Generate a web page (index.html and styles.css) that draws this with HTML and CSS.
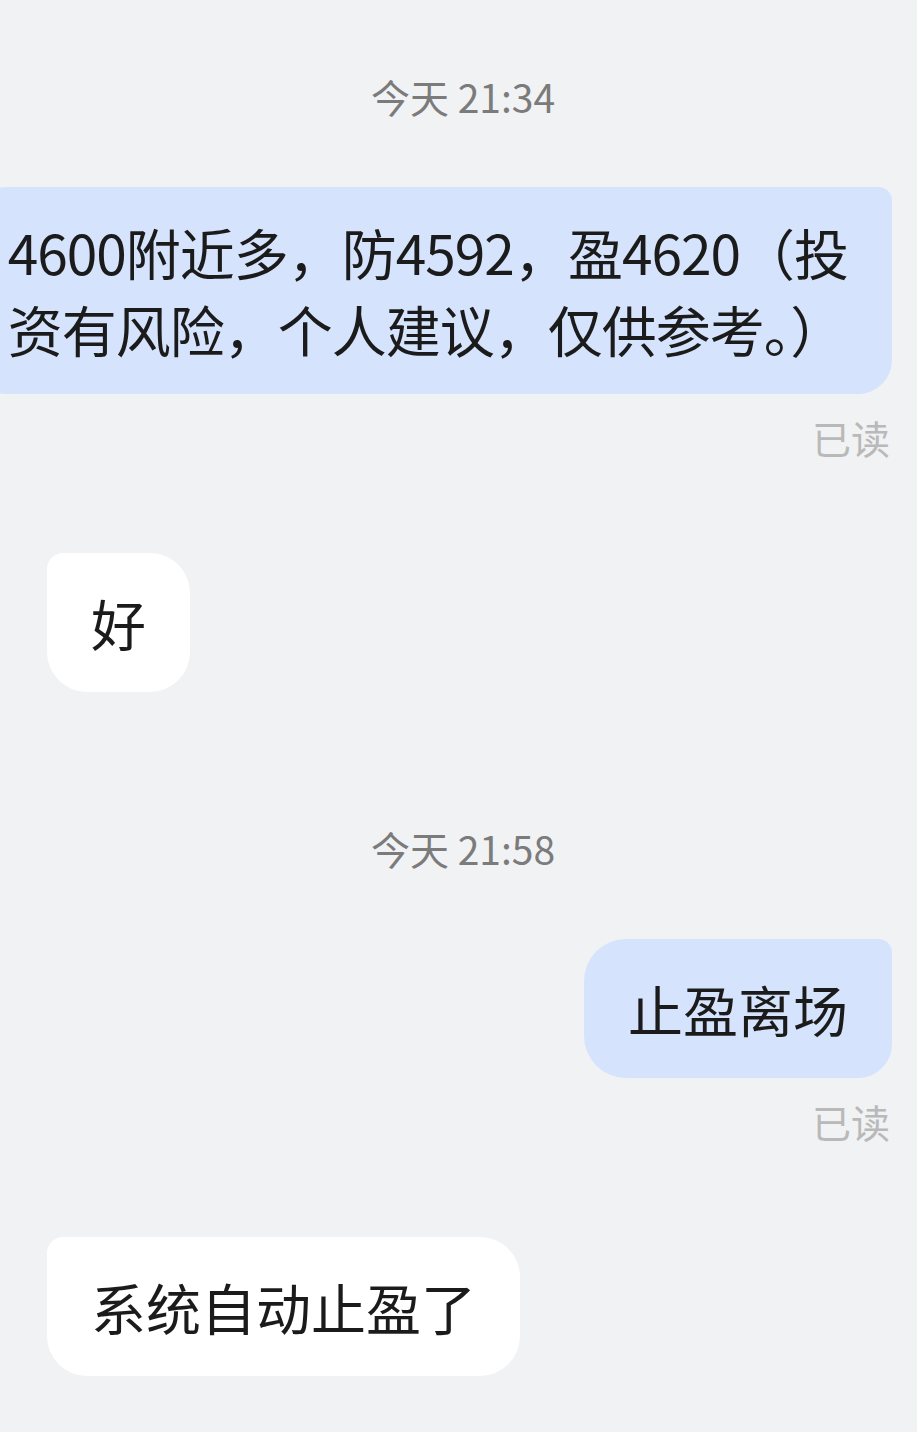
FILE: index.html
```html
<!DOCTYPE html>
<html lang="zh-CN">
<head>
    <meta charset="UTF-8">
    <meta name="viewport" content="width=device-width, initial-scale=1.0">
    <title>聊天记录</title>
    <link rel="stylesheet" href="styles.css">
</head>
<body>
    <div class="chat">
        <div class="time first">今天 21:34</div>

        <div class="row sent">
            <div class="bubble sent-bubble wide">4600附近多，防4592，盈4620（投<br>资有风险，个人建议，仅供参考。）</div>
        </div>
        <div class="read">已读</div>

        <div class="row received gap-big">
            <div class="bubble recv-bubble">好</div>
        </div>

        <div class="time second">今天 21:58</div>

        <div class="row sent">
            <div class="bubble sent-bubble">止盈离场</div>
        </div>
        <div class="read">已读</div>

        <div class="row received gap-big">
            <div class="bubble recv-bubble">系统自动止盈了</div>
        </div>
    </div>
</body>
</html>
```

FILE: styles.css
```css
html, body {
    margin: 0;
    padding: 0;
    background-color: #f1f2f4;
}
body {
    font-family: "Noto Sans CJK SC", "Noto Sans", sans-serif;
    color: #1b1b1b;
    overflow: hidden;
}
.chat {
    display: flex;
    flex-direction: column;
    padding: 71px 25px 60px 47px;
    min-height: 1300px;
}
.time {
    font-size: 39px;
    line-height: 50px;
    color: #7b7b7b;
    text-align: center;
    padding-right: 13px;
}
.time.second {
    margin-top: 131px;
}
.row {
    display: flex;
}
.row.sent {
    justify-content: flex-end;
    margin-top: 66px;
}
.row.received {
    justify-content: flex-start;
}
.gap-big {
    margin-top: 91px;
}
.bubble {
    font-size: 55px;
    line-height: 77px;
    padding: 31px 44px;
    white-space: nowrap;
}
.sent-bubble {
    background-color: #d5e3fc;
    border-radius: 42px 14px 34px 42px;
}
.sent-bubble.wide {
    padding: 26px 44px 27px;
    margin-left: -120px;
    letter-spacing: -1px;
}
.recv-bubble {
    background-color: #ffffff;
    border-radius: 16px 40px 40px 40px;
}
.read {
    font-size: 39px;
    line-height: 50px;
    color: #b9b9b9;
    text-align: right;
    margin-top: 18px;
    padding-right: 2px;
}
```
